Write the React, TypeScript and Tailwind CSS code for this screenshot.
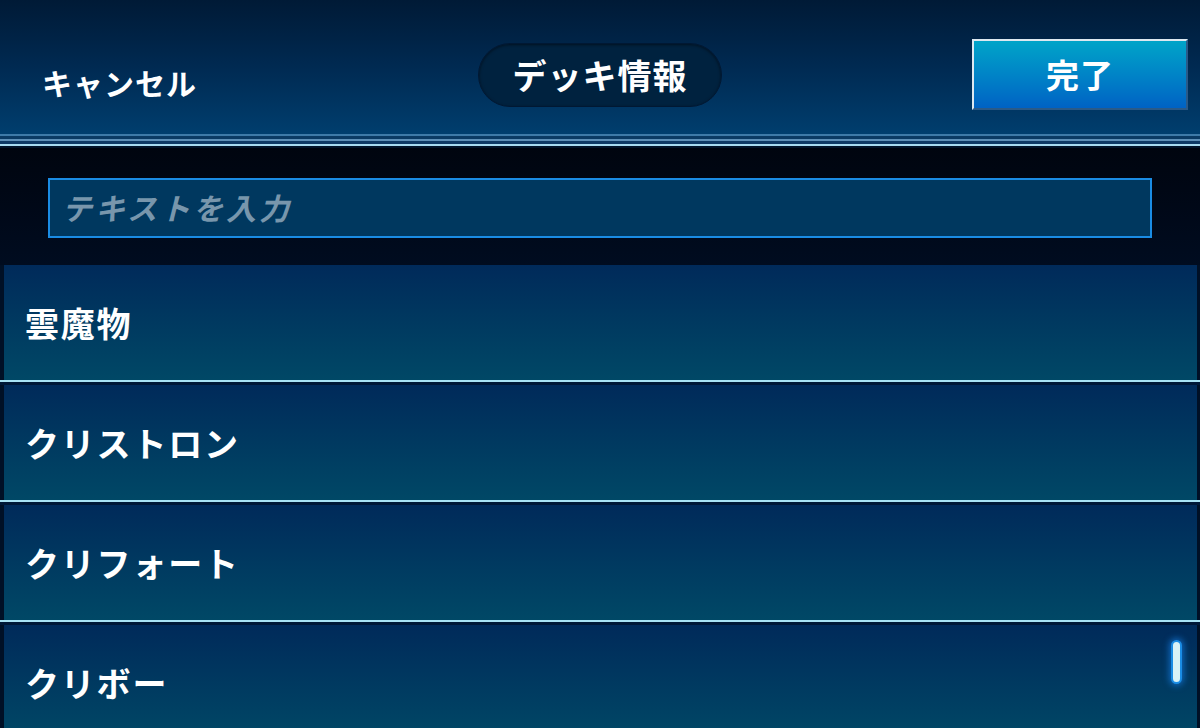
import React from 'react';

const rows = ['雲魔物', 'クリストロン', 'クリフォート', 'クリボー'];

const App: React.FC = () => {
  return (
    <div
      className="w-[1200px] h-[728px] overflow-hidden flex flex-col bg-[#000a1a] text-white"
      style={{ fontFamily: '"Noto Sans CJK JP", "Noto Sans", sans-serif' }}
    >
      {/* Header */}
      <div className="h-[134px] shrink-0 bg-gradient-to-b from-[#001a36] via-[#002a52] to-[#003e6e] grid grid-cols-[1fr_auto_1fr] items-center pt-[15px]">
        <div className="pl-[42px] mt-[16px] text-[30px] font-bold tracking-[1px]">キャンセル</div>
        <div className="w-[244px] h-[64px] rounded-full bg-[#00223f] border border-[#001833] shadow-[inset_0_1px_3px_rgba(0,0,0,0.5)] flex items-center justify-center text-[34px] font-bold tracking-[1px]">
          デッキ情報
        </div>
        <div className="flex justify-end pr-[12px]">
          <div className="w-[216px] h-[71px] border-t-2 border-l-2 border-[#dde8f0] border-r-2 border-b-2 border-r-[#2a5a88] border-b-[#2a5a88] bg-gradient-to-b from-[#00a4c8] to-[#0062c4] flex items-center justify-center text-[33px] font-bold tracking-[1px]">
            完了
          </div>
        </div>
      </div>
      {/* Header bottom lines */}
      <div className="shrink-0 flex flex-col">
        <div className="h-[2px] bg-[#3e7aa8]" />
        <div className="h-[3px] bg-[#0a3a64]" />
        <div className="h-[2px] bg-[#5e90b8]" />
        <div className="h-[3px] bg-[#0e3a66]" />
        <div className="h-[2px] bg-[#a8dcf2]" />
        <div className="h-[2px] bg-[#02142a]" />
      </div>

      {/* Search */}
      <div className="h-[117px] shrink-0 bg-gradient-to-b from-[#00050f] to-[#000c20] flex items-center px-[48px] pt-[2px]">
        <div className="w-full h-[60px] border-2 border-[#1a8ce4] bg-[#00385f] flex items-center px-[12px]">
          <span className="italic text-[30px] font-bold text-[#7896ac] tracking-[3px]">テキストを入力</span>
        </div>
      </div>

      {/* List */}
      <div className="relative flex-1 flex flex-col pl-[4px] pr-[3px] bg-[#001026]">
        {rows.map((r, i) => (
          <div key={r} className="flex flex-col shrink-0">
            <div className="h-[115px] bg-gradient-to-b from-[#002a5a] to-[#004866] flex items-center pl-[21px] text-[34px] font-bold tracking-[1.8px]">
              {r}
            </div>
            {i < rows.length - 1 && (
              <>
                <div className="h-[2px] bg-[#a8e2f4] ml-[-4px] mr-[-3px]" />
                <div className="h-[3px] bg-[#001838] ml-[-4px] mr-[-3px]" />
              </>
            )}
          </div>
        ))}
        <div className="absolute left-[1171px] top-[375px] w-[11px] h-[44px] rounded-full bg-[#d8f2f6] border-2 border-[#1a8ce4] shadow-[0_0_6px_2px_rgba(20,120,220,0.7)]" />
      </div>
    </div>
  );
};

export default App;
